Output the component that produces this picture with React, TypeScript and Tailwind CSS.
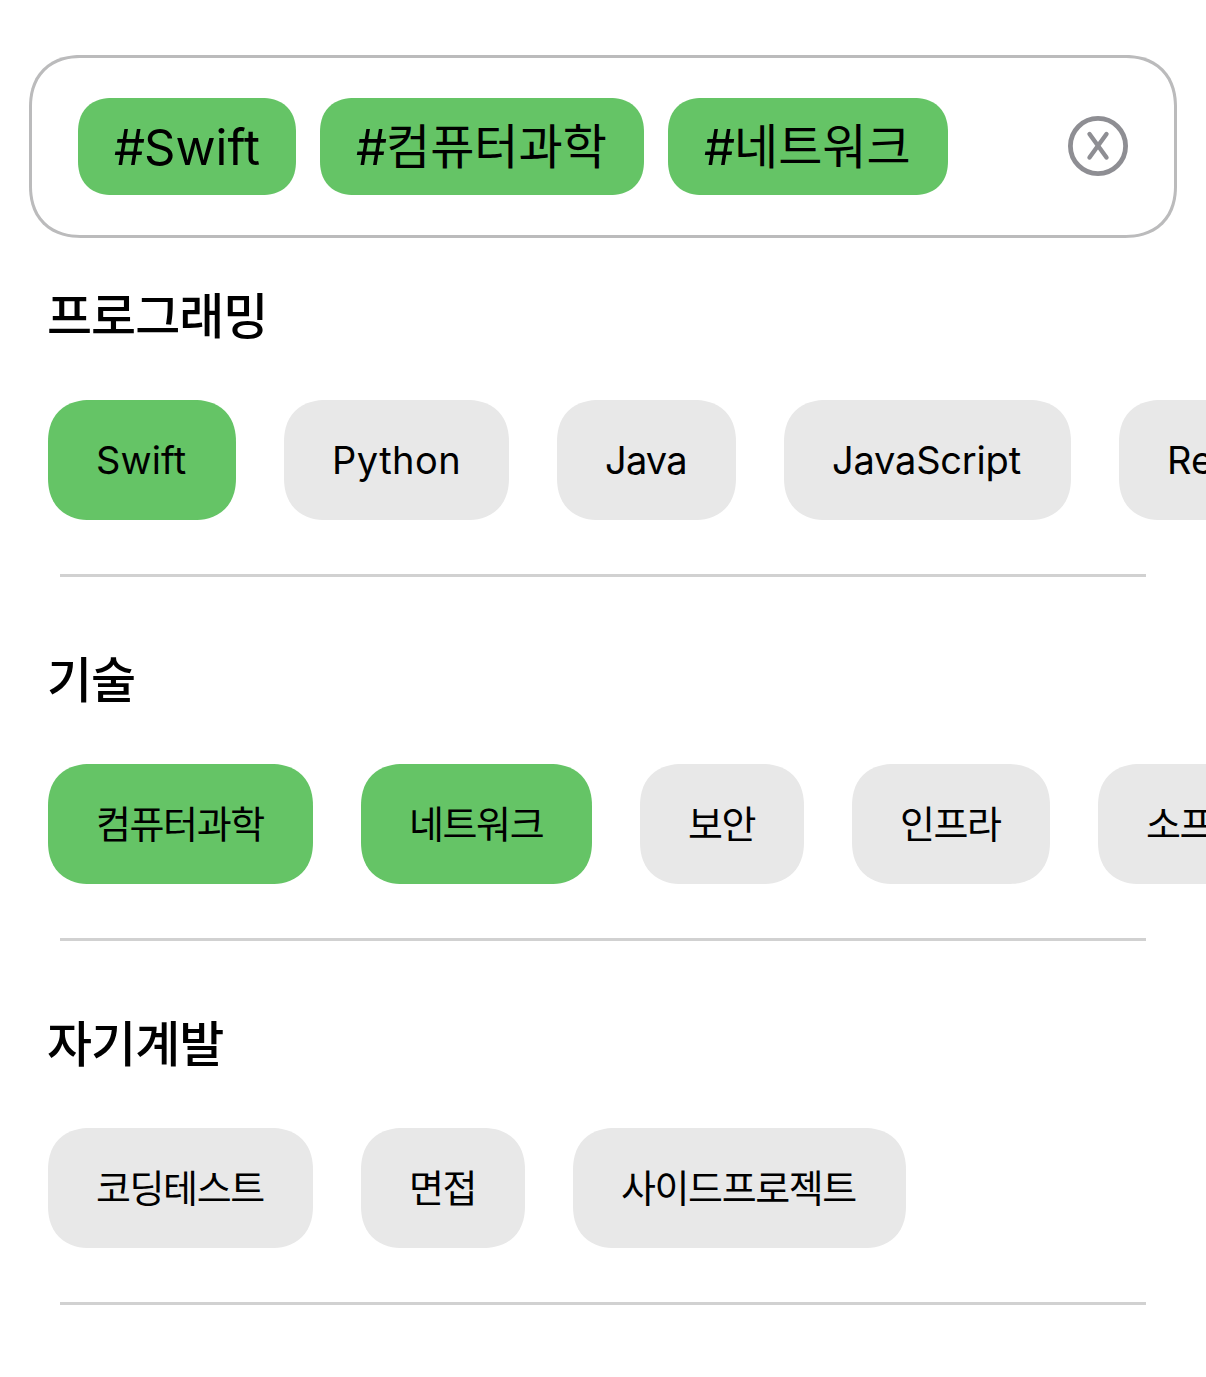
import React from 'react';

type Chip = { label: string; width: string; text: string; selected?: boolean };
type Section = { title: string; chips: Chip[] };

const HANGUL = 'tracking-[-1.4px]';

const sections: Section[] = [
  {
    title: '프로그래밍',
    chips: [
      { label: 'Swift', width: 'w-[188px]', text: 'tracking-[0.1px]', selected: true },
      { label: 'Python', width: 'w-[225px]', text: 'tracking-[0.5px]' },
      { label: 'Java', width: 'w-[179px]', text: 'tracking-[-0.8px]' },
      { label: 'JavaScript', width: 'w-[287px]', text: 'tracking-[-0.2px]' },
      { label: 'React', width: 'w-[197px]', text: 'tracking-[0px]' },
    ],
  },
  {
    title: '기술',
    chips: [
      { label: '컴퓨터과학', width: 'w-[265px]', text: HANGUL, selected: true },
      { label: '네트워크', width: 'w-[231px]', text: HANGUL, selected: true },
      { label: '보안', width: 'w-[164px]', text: HANGUL },
      { label: '인프라', width: 'w-[198px]', text: HANGUL },
      { label: '소프트웨어', width: 'w-[265px]', text: HANGUL },
    ],
  },
  {
    title: '자기계발',
    chips: [
      { label: '코딩테스트', width: 'w-[265px]', text: HANGUL },
      { label: '면접', width: 'w-[164px]', text: HANGUL },
      { label: '사이드프로젝트', width: 'w-[333px]', text: HANGUL },
    ],
  },
];

const tags = [
  { label: 'Swift', width: 'w-[218px]', text: 'text-[49px] tracking-[0px]' },
  { label: '컴퓨터과학', width: 'w-[324px]', text: 'text-[48px] tracking-[0px]' },
  { label: '네트워크', width: 'w-[280px]', text: 'text-[48px] tracking-[0px]' },
];

function ClearIcon() {
  return (
    <svg width="60" height="60" viewBox="0 0 60 60" fill="none" stroke="#8e8e93" strokeLinecap="round">
      <circle cx="30" cy="30" r="27.6" strokeWidth="4.8" />
      <path d="M21.5 18 38.5 41.5M38.5 18 21.5 41.5" strokeWidth="4.4" />
    </svg>
  );
}

function SearchField() {
  return (
    <div className="mx-[29px] mt-[54.5px] flex h-[183px] shrink-0 items-center justify-between rounded-[52px] border-[3px] border-[#bbbbbc] pr-[46px] pl-[46px] [corner-shape:superellipse(1.18)]">
      <div className="flex gap-6">
        {tags.map((t) => (
          <div
            key={t.label}
            className={`flex h-[97px] items-center rounded-[34px] bg-[#65c466] pt-[2px] pl-9 leading-none whitespace-nowrap [corner-shape:superellipse(1.18)] ${t.width}`}
          >
            <span className="text-[49px] tracking-[-1px]">#</span>
            <span className={t.text}>{t.label}</span>
          </div>
        ))}
      </div>
      <button aria-label="Clear">
        <ClearIcon />
      </button>
    </div>
  );
}

export default function App() {
  return (
    <main className="flex h-[1377px] w-[1206px] flex-col overflow-hidden bg-white font-['Inter','Noto_Sans_CJK_KR',sans-serif] text-black">
      <SearchField />
      <div className="mt-[41.5px] flex flex-col">
        {sections.map((s) => (
          <section key={s.title} className="flex h-[364px] flex-col">
            <h2 className="ml-[47px] h-[72px] pt-[2px] text-[49px] leading-[72px] font-medium tracking-[-1px]">{s.title}</h2>
            <div className="mt-[49px] ml-12 flex gap-12">
              {s.chips.map((c) => (
                <div
                  key={c.label}
                  className={`flex h-[120px] shrink-0 items-center rounded-[42px] pl-12 text-[38px] leading-none whitespace-nowrap [corner-shape:superellipse(1.18)] ${c.width} ${c.text} ${c.selected ? 'bg-[#65c466]' : 'bg-[#e8e8e8]'}`}
                >
                  {c.label}
                </div>
              ))}
            </div>
            <hr className="mt-[54px] mr-[60px] ml-[60px] h-[3px] border-0 bg-[#d1d1d1]" />
          </section>
        ))}
      </div>
    </main>
  );
}
